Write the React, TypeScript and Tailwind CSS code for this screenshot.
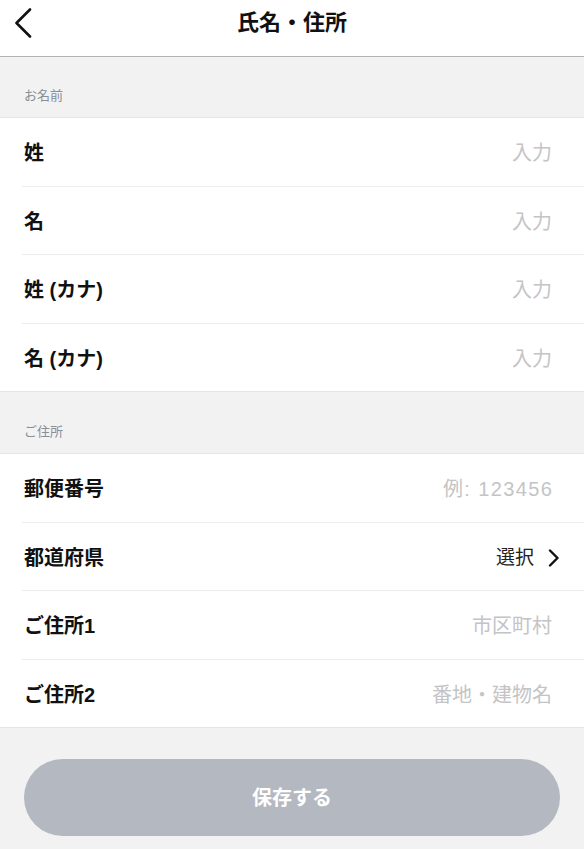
import React from "react";

const font = { fontFamily: '"Liberation Sans", "Noto Sans CJK JP", "Noto Sans", sans-serif' };

function Row({ label, placeholder, last, select, wide }: { label: string; placeholder?: string; last?: boolean; select?: boolean; wide?: boolean }) {
  return (
    <div className={"relative flex h-[68.5px] items-center justify-between bg-white pl-6 pt-[2px] " + (select ? "pr-[24px]" : "pr-8")}>
      <span className="text-[20px] font-bold text-[#111]">{label}</span>
      {select ? (
        <span className="flex items-center gap-[14px] text-[19px] text-[#222]">
          選択
          <svg width="12" height="18" viewBox="0 0 12 18" fill="none">
            <path d="M2 1.5 L9.5 9 L2 16.5" stroke="#111" strokeWidth="2.4" strokeLinecap="round" strokeLinejoin="round" />
          </svg>
        </span>
      ) : (
        <span className={"text-[20px] text-[#c4c4c6] " + (wide ? "tracking-[1.4px] -mr-[1.4px]" : "")}>{placeholder}</span>
      )}
      {last ? (
        <div className="absolute bottom-0 left-0 right-0 h-px bg-[#e6e6e6]" />
      ) : (
        <div className="absolute bottom-0 left-[22px] right-0 h-px bg-[#ececec]" />
      )}
    </div>
  );
}

function Section({ title, h }: { title: string; h: string }) {
  return (
    <div className={"flex items-end bg-[#f2f2f2] pb-[12px] pl-6 border-b border-[#e6e6e6] " + h}>
      <span className="text-[13px] text-[#8a8e96]">{title}</span>
    </div>
  );
}

export default function App() {
  return (
    <div style={font} className="min-h-[849px] w-[584px] bg-[#f2f2f2]">
      <div className="h-[57px] bg-white border-b border-[#b3b3b3]">
        <div className="relative flex h-[44px] items-center justify-center pt-[1px]">
          <svg className="absolute left-[13px] top-[8px]" width="20" height="30" viewBox="0 0 20 30" fill="none">
            <path d="M17 1.5 L3.5 15 L17 28.5" stroke="#111" strokeWidth="2.6" strokeLinecap="round" strokeLinejoin="round" />
          </svg>
          <span className="text-[22px] font-bold text-[#111]">氏名・住所</span>
        </div>
      </div>
      <Section title="お名前" h="h-[61px]" />
      <Row label="姓" placeholder="入力" />
      <Row label="名" placeholder="入力" />
      <Row label="姓 (カナ)" placeholder="入力" />
      <Row label="名 (カナ)" placeholder="入力" last />
      <Section title="ご住所" h="h-[62px]" />
      <Row label="郵便番号" placeholder="例: 123456" wide />
      <Row label="都道府県" select />
      <Row label="ご住所1" placeholder="市区町村" />
      <Row label="ご住所2" placeholder="番地・建物名" last />
      <div className="px-6 pt-[31px]">
        <button className="flex h-[77px] w-full items-center justify-center rounded-full bg-[#b4b8c1] text-[20px] font-bold text-white">
          保存する
        </button>
      </div>
    </div>
  );
}
